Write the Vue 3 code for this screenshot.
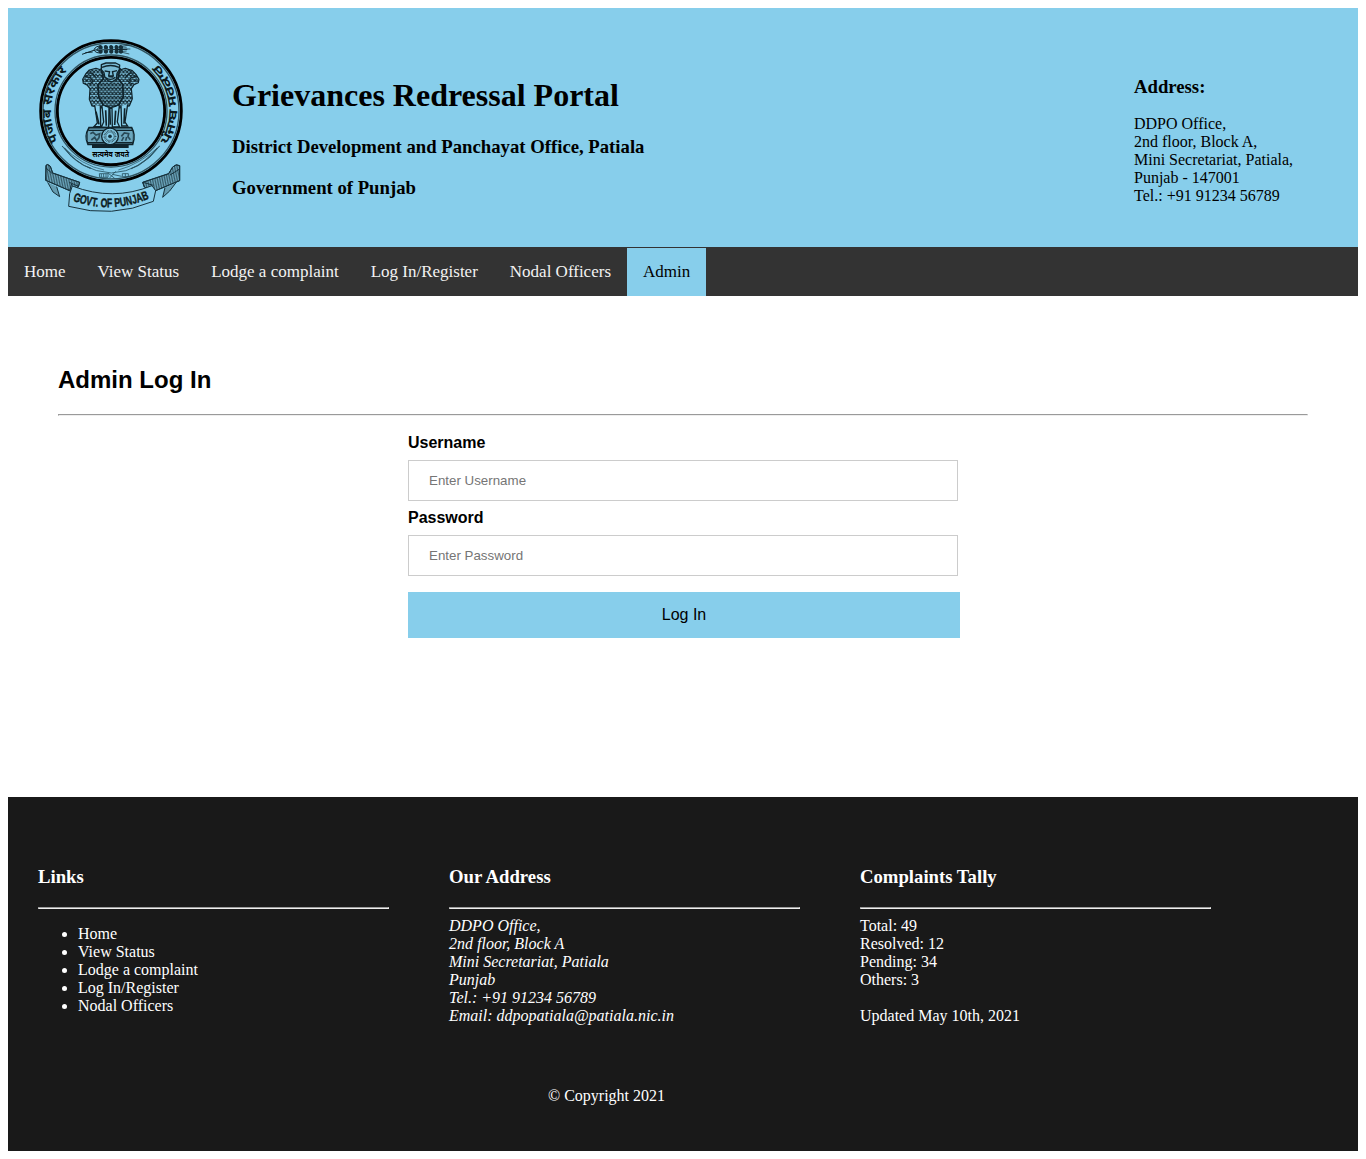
<script setup>
const nav = ['Home', 'View Status', 'Lodge a complaint', 'Log In/Register', 'Nodal Officers', 'Admin']
const links = nav.slice(0, 5)
</script>

<template>
  <div class="page">
    <header class="header">
      <svg class="emblem" viewBox="0 0 495 570" role="img" aria-label="Government of Punjab emblem">
        <defs>
          <path id="arc-left" d="M86 332 A178 178 0 0 1 120 114" />
          <path id="arc-right" d="M413 345 A197 197 0 0 0 366 88" />
          <path id="arc-ribbon" d="M128 512 Q246 556 368 501" />
          <pattern id="fur" width="11" height="13" patternUnits="userSpaceOnUse">
            <path d="M0 2 Q5 13 11 2 M-5 8 Q0 18 5 9 M6 9 Q11 18 16 8" fill="none" stroke="#10242c" stroke-width="3.4" />
          </pattern>
          <pattern id="hatch" width="5" height="5" patternUnits="userSpaceOnUse" patternTransform="rotate(8)">
            <path d="M1 0 V5" stroke="#152d37" stroke-width="1.8" />
          </pattern>
        </defs>

        <g fill="none" stroke="#000">
          <circle cx="243" cy="243" r="211" stroke-width="8.5" />
          <circle cx="243" cy="243" r="204" stroke-width="4" stroke="#31535f" />
          <circle cx="243" cy="243" r="161" stroke-width="8.5" />
          <circle cx="243" cy="243" r="168" stroke-width="4" stroke="#31535f" />
        </g>

        <!-- wheat ear -->
        <g stroke="#10242c" stroke-width="3" fill="none">
          <path d="M156 73 L194 60 L292 58 M166 68 L188 66" />
          <path d="M192 59 Q198 47 211 49 L200 59 L214 68 Q198 71 192 60" />
          <path d="M272 49 L299 45 M272 57 L301 57 M272 66 L298 72 M268 50 L290 52 M268 65 L290 63" stroke-width="2" />
        </g>
        <g fill="#16303a">
          <path v-for="x in [207, 223, 239, 255, 268]" :key="x" :d="`M${x} 57 Q${x - 5} 46 ${x + 5} 45 Q${x + 14} 48 ${x + 10} 57 Z M${x} 60 Q${x - 5} 70 ${x + 5} 71 Q${x + 14} 69 ${x + 10} 60 Z`" />
        </g>

        <g class="ring-text">
          <text><textPath href="#arc-left" textLength="226" lengthAdjust="spacingAndGlyphs">पंजाब सरकार</textPath></text>
          <text><textPath href="#arc-right" textLength="264" lengthAdjust="spacingAndGlyphs">ਪੰਜਾਬ ਸਰਕਾਰ</textPath></text>
        </g>

        <!-- side lions -->
        <g stroke="#10242c" stroke-width="3.5" stroke-linejoin="round">
          <path d="M214 120 L198 115 L178 120 L167 132 L158 148 L160 160 L172 166 L180 176 L178 208 L186 228 L216 234 L226 160 Z" fill="url(#fur)" />
          <path d="M268 120 L286 115 L307 122 L318 133 L327 148 L325 158 L312 164 L304 176 L307 206 L298 228 L268 234 L258 160 Z" fill="url(#fur)" />
          <path d="M164 139 L181 143 L189 155 L178 162 M170 129 L188 130 L199 144 M166 153 L174 149 M321 139 L304 143 L295 155 L307 162 M314 129 L297 130 L285 144 M320 153 L311 149" fill="none" />
        </g>
        <!-- centre lion -->
        <g stroke="#10242c" stroke-width="4" stroke-linejoin="round">
          <path d="M214 116 L220 146 L204 165 L206 201 L220 225 L243 235 L267 224 L280 199 L278 163 L264 145 L270 116 Z" fill="#6fabc3" />
          <path d="M214 116 L220 146 L204 165 L206 201 L220 225 L243 235 L267 224 L280 199 L278 163 L264 145 L270 116 Z" fill="url(#fur)" />
          <path d="M214 104 L228 99 L257 99 L269 105 L268 119 L261 130 L259 147 L246 156 L234 152 L224 140 L222 128 L214 119 Z" fill="#79bad4" />
          <path d="M216 112 Q242 101 267 112 M224 123 L237 125 M249 125 L261 122 M239 123 L236 138 L250 138 L247 123 M228 143 Q243 154 256 142 M235 140 L250 141" fill="none" />
        </g>
        <!-- legs -->
        <g fill="#87ceeb" stroke="#10242c" stroke-width="4">
          <path d="M194 225 L202 279 L192 290 L212 290 L211 228 M216 229 L221 276 L214 292 L236 292 L237 234 M246 234 L247 291 L269 291 L262 276 L268 228 M273 227 L275 288 L293 288 L285 276 L293 223" />
          <path d="M198 245 L207 283 M227 241 L229 287 M257 242 L254 285 M284 235 L282 281 M239 233 L241 284" fill="none" stroke-width="5" />
        </g>
        <!-- abacus -->
        <g stroke="#10242c" fill="none">
          <path d="M177 293 H305 Q317 314 308 343 H174 Q162 318 177 293 Z" fill="#6ba6bd" stroke-width="5" />
          <path d="M175 301 H306 M174 338 H308" stroke-width="4" />
          <circle cx="240" cy="319" r="25" fill="#87ceeb" stroke-width="4" />
          <circle cx="240" cy="319" r="15" stroke-width="9" stroke="#31535f" stroke-dasharray="2 1.8" />
          <circle cx="240" cy="319" r="5" fill="#16303a" />
          <path d="M181 311 L189 307 L198 315 L209 311 L207 323 L200 332 L194 322 L184 330 M274 319 L283 309 L296 311 L294 320 L301 329 M281 321 L275 333 M290 321 L287 332 M171 311 V330 M311 311 V330" stroke-width="5" stroke="#294a57" />
          <path d="M186 349 H296" stroke-width="10" />
        </g>
        <text class="motto" x="187" y="380" textLength="110" lengthAdjust="spacingAndGlyphs">सत्यमेव जयते</text>

        <!-- crossed stems below the shield -->
        <g fill="none" stroke="#27505f" stroke-width="2.5">
          <path d="M96 348 Q150 423 244 429 Q335 424 389 348" />
          <path d="M96 348 Q157 407 222 420 M389 348 Q330 403 265 420" stroke-width="2" />
          <path d="M103 354 Q137 399 182 415 M382 354 Q347 398 303 416" stroke-width="3.5" />
          <path d="M208 431 H234 V442 H209 Z M214 432 V442 M221 432 V442 M228 432 V442 M234 429 L254 445 M238 445 L257 424 M247 433 L275 439 M277 431 H295 V440 H277 Z M286 431 V440" />
        </g>

        <!-- ribbon -->
        <g stroke="#17323d" stroke-width="3" stroke-linejoin="round">
          <path d="M48 406 Q52 400 61 409 L68 429 L149 457 L145 471 L119 482 L47 451 Z" fill="#6ca7be" />
          <path d="M48 406 Q52 400 61 409 L68 429 L149 457 L145 471 L119 482 L47 451 Z" fill="url(#hatch)" />
          <path d="M53 457 L69 486 L89 500 L80 470 M48 414 L67 431 M118 457 L147 470 M125 462 L119 480" fill="#659cb1" />
          <path d="M449 407 Q439 400 428 411 L416 431 L338 457 L343 471 L372 484 L449 452 Z" fill="#6ca7be" />
          <path d="M449 407 Q439 400 428 411 L416 431 L338 457 L343 471 L372 484 L449 452 Z" fill="url(#hatch)" />
          <path d="M438 458 L419 483 L398 502 L405 473 M449 417 L420 435 M339 457 L370 466" fill="#659cb1" />
          <path d="M127 468 Q247 515 366 467 L377 482 L370 514 Q246 566 116 529 L119 491 Z" fill="#87ceeb" />
        </g>
        <text class="ribbon-text"><textPath href="#arc-ribbon" textLength="236" lengthAdjust="spacingAndGlyphs">GOVT. OF PUNJAB</textPath></text>
      </svg>
      <div class="titles">
        <h1>Grievances Redressal Portal</h1>
        <h3>District Development and Panchayat Office, Patiala</h3>
        <h3>Government of Punjab</h3>
      </div>
      <div class="contact">
        <h3>Address:</h3>
        <p>DDPO Office,<br>2nd floor, Block A,<br>Mini Secretariat, Patiala,<br>Punjab - 147001<br>Tel.: +91 91234 56789</p>
      </div>
    </header>

    <nav class="nav">
      <a v-for="item in nav" :key="item" :class="{ active: item === 'Admin' }">{{ item }}</a>
    </nav>

    <main class="main">
      <h2>Admin Log In</h2>
      <hr>
      <form class="login" @submit.prevent>
        <label for="username">Username</label>
        <input id="username" type="text" placeholder="Enter Username">
        <label for="password">Password</label>
        <input id="password" type="password" placeholder="Enter Password">
        <button type="submit">Log In</button>
      </form>
    </main>

    <footer class="footer">
      <div class="columns">
        <section>
          <h3>Links</h3>
          <hr>
          <ul>
            <li v-for="link in links" :key="link">{{ link }}</li>
          </ul>
        </section>
        <section>
          <h3>Our Address</h3>
          <hr>
          <address>DDPO Office,<br>2nd floor, Block A<br>Mini Secretariat, Patiala<br>Punjab<br>Tel.: +91 91234 56789<br>Email: ddpopatiala@patiala.nic.in</address>
        </section>
        <section>
          <h3>Complaints Tally</h3>
          <hr>
          <p>Total: 49<br>Resolved: 12<br>Pending: 34<br>Others: 3<br><br>Updated May 10th, 2021</p>
        </section>
      </div>
      <p class="copyright">© Copyright 2021</p>
    </footer>
  </div>
</template>

<style>
body { margin: 0; background: #fff; }
</style>

<style scoped>
.page { padding: 8px; font: 16px/18px "Liberation Serif", "Times New Roman", serif; color: #000; }
h1, h2, h3, p { margin: 0; }
hr { border: 1px solid; border-color: #9a9a9a #eee #eee #9a9a9a; }
.header { display: flex; box-sizing: border-box; height: 239px; background: #87ceeb; }
.emblem { width: 165px; height: 190px; margin: 22px 0 0 22px; flex: none; }
.ring-text text { font: bold 38px "Noto Sans Devanagari", "Noto Sans Gurmukhi", "Noto Sans", sans-serif; fill: #0b1a20; }
.motto { font: bold 22px "Noto Sans Devanagari", "Noto Sans", sans-serif; }
.ribbon-text { font: bold 37px "Liberation Sans", Arial, sans-serif; fill: #0b1a20; stroke: #0b1a20; stroke-width: 1.2px; }
.titles { margin: 69px 0 0 37px; }
h1 { font-size: 32px; line-height: 37px; margin-bottom: 22px; }
.titles h3 { font-size: 18.72px; line-height: 21px; margin-bottom: 20px; }
.contact { margin: 68px 64px 0 auto; width: 160px; white-space: nowrap; }
.contact h3 { font-size: 18.72px; line-height: 21px; margin-bottom: 18px; }
.nav { display: flex; box-sizing: border-box; height: 49px; padding-top: 1px; background: #333; }
.nav a { padding: 14px 16px; font-size: 17px; line-height: 20px; color: #f2f2f2; }
.nav .active { background: #87ceeb; color: #000; }
.main { box-sizing: border-box; height: 501px; padding: 70px 50px 0; font-family: "Liberation Sans", Arial, sans-serif; }
h2 { font-size: 24px; line-height: 28px; }
.main hr { margin: 20px 0 0; }
.login { display: flex; flex-direction: column; width: 552px; margin: 17px 0 0 350px; }
label { font-weight: bold; font-size: 16px; line-height: 20px; }
input { box-sizing: border-box; width: 550px; height: 41px; margin: 7px 0; padding: 0 20px; border: 1px solid #ccc; background: #fff; font: 13.333px "Liberation Sans", Arial, sans-serif; }
input::placeholder { color: #757575; }
button { width: 552px; height: 46px; margin-top: 9px; padding: 0; border: 0; background: #87ceeb; color: #000; font: 16px "Liberation Sans", Arial, sans-serif; }
.footer { box-sizing: border-box; height: 354px; padding: 69px 30px 0; background: #191919; color: #fff; }
.columns { display: flex; gap: 60px; height: 221px; }
section { width: 351px; }
section h3 { font-size: 18.72px; line-height: 21px; }
section hr { margin: 20px 0 8px; }
ul { margin: 16px 0 0; padding-left: 40px; }
.copyright { width: 1137px; text-align: center; }
</style>
